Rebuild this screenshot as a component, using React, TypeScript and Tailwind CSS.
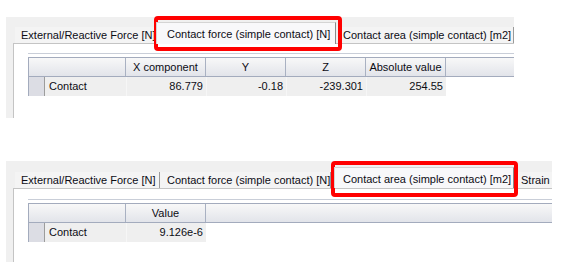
import React from "react";

const hdr =
  "h-full flex items-center justify-center border-r border-[#a9b1c2] bg-linear-to-b from-[#f8f8f8] to-[#e2e4ea] shrink-0";

function TableTop() {
  const cols = ["X component", "Y", "Z", "Absolute value"];
  const vals = ["86.779", "-0.18", "-239.301", "254.55"];
  return (
    <div className="w-[486px] border-t border-[#c9ced8] pt-[3px]">
      <div className="flex h-[20px] border-l border-t border-b border-[#a3abbd]">
        <div className={hdr + " w-[97px]"}></div>
        {cols.map((c) => (
          <div key={c} className={hdr + " w-[80px]"}>
            {c}
          </div>
        ))}
        <div className="h-full flex-1 bg-linear-to-b from-[#f8f8f8] to-[#e2e4ea]"></div>
      </div>
      <div className="flex h-[19px] border-l border-[#a3abbd]">
        <div className="w-[16px] h-full bg-[#dcdde4] border-r border-[#9c9c9c]"></div>
        <div className="w-[81px] h-full bg-[#efefef] flex items-center pl-[4px]">Contact</div>
        {vals.map((v) => (
          <div key={v} className="w-[80px] h-full bg-[#efefef] flex items-center justify-end pr-[3px] border-l border-[#f6f6f6]">
            {v}
          </div>
        ))}
        <div className="flex-1 bg-white"></div>
      </div>
    </div>
  );
}

function TableBottom() {
  return (
    <div className="w-[524px] border-t border-[#c9ced8] pt-[3px]">
      <div className="flex h-[20px] border-l border-t border-b border-[#a3abbd]">
        <div className={hdr + " w-[97px]"}></div>
        <div className={hdr + " w-[80px]"}>Value</div>
        <div className="h-full flex-1 bg-linear-to-b from-[#f8f8f8] to-[#e2e4ea]"></div>
      </div>
      <div className="flex h-[19px] border-l border-[#a3abbd]">
        <div className="w-[16px] h-full bg-[#dcdde4] border-r border-[#9c9c9c]"></div>
        <div className="w-[81px] h-full bg-[#efefef] flex items-center pl-[4px]">Contact</div>
        <div className="w-[80px] h-full bg-[#efefef] flex items-center justify-end pr-[3px] border-l border-[#f6f6f6]">
          9.126e-6
        </div>
        <div className="flex-1 bg-white"></div>
      </div>
    </div>
  );
}

const tabIdle =
  "h-[16px] flex items-center border-r border-[#9a9a9a] bg-[#f4f4f4] whitespace-nowrap shrink-0";
const tabSel =
  "h-[22px] flex items-center pt-[2px] bg-[#f8f8fa] border-t border-l border-[#d4d4d4] border-r-[#8a8a8a] relative z-10 -mb-[1px] whitespace-nowrap shrink-0";

export default function App() {
  return (
    <div className="w-[564px] h-[266px] bg-white font-['Liberation_Sans',Arial,sans-serif] text-[11px] text-[#0c0c14] leading-none overflow-hidden">
      <div className="pt-[17px] pl-[6px]">
        <div className="relative w-[508px] h-[101px] bg-[#f0f0f0] flex flex-col">
          <div className="h-[26px] flex items-end pl-[9px]">
            <div className={tabIdle + " w-[141px] pl-[6px]"}>External/Reactive Force [N]</div>
            <div className={tabSel + " w-[180px] pl-[10px] border-r"}>Contact force (simple contact) [N]</div>
            <div className={tabIdle + " ml-[2px] w-[176px] pl-[5px]"}>Contact area (simple contact) [m2]</div>
          </div>
          <div className="flex-1 ml-[7px] bg-white border-l border-t border-[#c4c4c4] pl-[14px] pt-[9px]">
            <TableTop />
          </div>
          <div className="absolute left-[148px] top-[-1px] w-[188px] h-[35px] border-[4px] border-[#ff0000] rounded-[4px]" />
        </div>
      </div>
      <div className="pt-[43px] pl-[6px]">
        <div className="relative w-[546px] h-[101px] bg-[#f0f0f0] flex flex-col">
          <div className="h-[27px] flex items-end pl-[9px] overflow-hidden">
            <div className={tabIdle + " w-[145px] pl-[6px]"}>External/Reactive Force [N]</div>
            <div className={tabIdle + " w-[171px] pl-[7px]"}>Contact force (simple contact) [N]</div>
            <div className={tabSel + " ml-[3px] w-[180px] pl-[8px] border-r"}>Contact area (simple contact) [m2]</div>
            <div className="h-[16px] flex items-center bg-[#f4f4f4] whitespace-nowrap shrink-0 ml-[2px] w-[36px] pl-[5px]">Strain</div>
          </div>
          <div className="flex-1 ml-[7px] bg-white border-l border-t border-[#c4c4c4] pl-[14px] pt-[10px]">
            <TableBottom />
          </div>
          <div className="absolute left-[325px] top-[0px] w-[187px] h-[36px] border-[4px] border-[#ff0000] rounded-[4px]" />
        </div>
      </div>
    </div>
  );
}
